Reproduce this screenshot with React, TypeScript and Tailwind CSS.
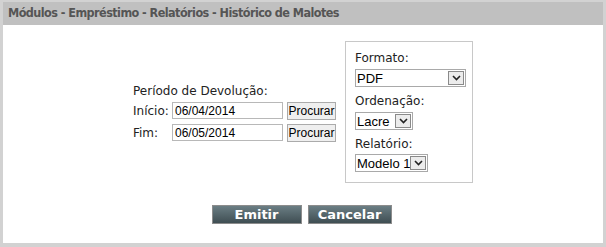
import React from "react";

function Chevron() {
  return (
    <svg width="9" height="6" viewBox="0 0 9 6" className="block">
      <path d="M1 1 L4.5 4.5 L8 1" fill="none" stroke="#222" strokeWidth="1.6" />
    </svg>
  );
}

function FakeSelect({ value, width }: { value: string; width: string }) {
  return (
    <div className={`flex h-[18px] items-center border border-[#a9a9a9] bg-white ${width}`}>
      <span className="flex-1 whitespace-nowrap pl-[1px] text-[13px] leading-none text-black [font-family:'Liberation_Sans',Arial,sans-serif]">
        {value}
      </span>
      <div className="mr-[1px] flex h-[14px] w-[16px] shrink-0 items-center justify-center border border-[#8a8a8a] bg-[#ececec]">
        <Chevron />
      </div>
    </div>
  );
}

function DateRow({ label, value }: { label: string; value: string }) {
  return (
    <div className="flex items-center">
      <span className="w-[39px] text-[12px] text-[#222]">{label}</span>
      <div className="flex h-[17px] w-[111px] items-center border border-[#b8b8b8] bg-white pl-[2px] text-[12px] text-black [font-family:'Liberation_Sans',Arial,sans-serif]">
        {value}
      </div>
      <button className="ml-[4px] h-[18px] w-[49px] border border-[#ababab] bg-[#efefef] text-[12px] leading-none text-black [font-family:'Liberation_Sans',Arial,sans-serif]">
        Procurar
      </button>
    </div>
  );
}

export default function App() {
  return (
    <div className="h-[247px] w-[606px] bg-[#d2d2d2] pb-[4px] pl-[3px] pr-[3px] pt-[2px] [font-family:'DejaVu_Sans',Verdana,sans-serif]">
      <div className="flex h-full flex-col bg-white">
        {/* Title bar */}
        <div className="flex h-[23px] items-center whitespace-nowrap bg-[#c0c0c0] pl-[5px] text-[12.5px] font-bold tracking-[-0.55px] text-[#555] [font-family:'DejaVu_Sans_Condensed','DejaVu_Sans',sans-serif]">
          Módulos - Empréstimo - Relatórios - Histórico de Malotes
        </div>

        {/* Form body */}
        <div className="mt-[16px] flex items-center justify-center">
          <div className="flex flex-col gap-[4px] pr-[9px] pt-[1px]">
            <span className="text-[12px] leading-[14px] text-[#222]">Período de Devolução:</span>
            <DateRow label="Início:" value="06/04/2014" />
            <DateRow label="Fim:" value="06/05/2014" />
          </div>

          <div className="flex h-[142px] w-[128px] flex-col border border-[#c8c8c8] pl-[9px] pt-[9px] text-[12px] text-[#222]">
            <span className="leading-[14px]">Formato:</span>
            <div className="mt-[4px]">
              <FakeSelect value="PDF" width="w-[111px]" />
            </div>
            <span className="mt-[7px] leading-[14px]">Ordenação:</span>
            <div className="mt-[4px]">
              <FakeSelect value="Lacre" width="w-[58px]" />
            </div>
            <span className="mt-[7px] leading-[14px]">Relatório:</span>
            <div className="mt-[3px]">
              <FakeSelect value="Modelo 1" width="w-[73px]" />
            </div>
          </div>
        </div>

        {/* Actions */}
        <div className="mt-[22px] flex justify-center gap-[6px] pr-[3px]">
          <button className="h-[19px] w-[90px] border border-[#8c8c8c] bg-gradient-to-b from-[#6b7e84] to-[#3f4e53] text-[13px] font-bold leading-none text-white">
            Emitir
          </button>
          <button className="h-[19px] w-[84px] border border-[#8c8c8c] bg-gradient-to-b from-[#6b7e84] to-[#3f4e53] text-[13px] font-bold leading-none text-white">
            Cancelar
          </button>
        </div>
      </div>
    </div>
  );
}
